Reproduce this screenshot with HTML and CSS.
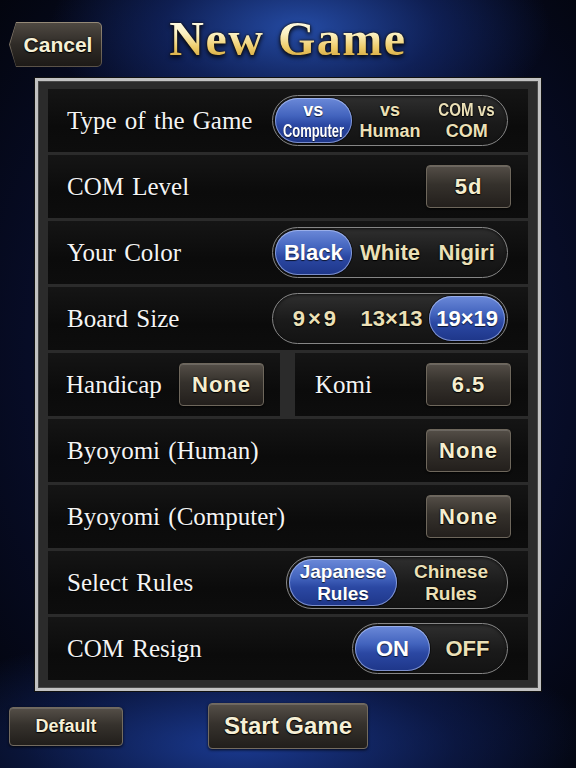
FILE: index.html
```html
<!DOCTYPE html>
<html lang="en">
<head>
<meta charset="utf-8">
<title>New Game</title>
<link rel="stylesheet" href="styles.css">
</head>
<body>
<div class="screen">
  <header class="top">
    <div class="cancel"><span class="cancel-face">Cancel</span></div>
    <h1 class="title">New Game</h1>
    <div class="spacer"></div>
  </header>

  <main class="panel">
    <div class="row">
      <span class="label">Type of the Game</span>
      <div class="seg seg-3">
        <span class="opt two on"><span>vs</span><span class="narrow n70">Computer</span></span>
        <span class="opt two"><span>vs</span><span>Human</span></span>
        <span class="opt two"><span class="narrow n82">COM vs</span><span>COM</span></span>
      </div>
    </div>

    <div class="row">
      <span class="label">COM Level</span>
      <span class="btn">5d</span>
    </div>

    <div class="row">
      <span class="label">Your Color</span>
      <div class="seg seg-3">
        <span class="opt on">Black</span>
        <span class="opt">White</span>
        <span class="opt">Nigiri</span>
      </div>
    </div>

    <div class="row">
      <span class="label">Board Size</span>
      <div class="seg seg-3 seg-board">
        <span class="opt wide">9×9</span>
        <span class="opt">13×13</span>
        <span class="opt on">19×19</span>
      </div>
    </div>

    <div class="split">
      <div class="row cell-left">
        <span class="label">Handicap</span>
        <span class="btn">None</span>
      </div>
      <div class="row cell-right">
        <span class="label">Komi</span>
        <span class="btn">6.5</span>
      </div>
    </div>

    <div class="row">
      <span class="label">Byoyomi (Human)</span>
      <span class="btn">None</span>
    </div>

    <div class="row">
      <span class="label">Byoyomi (Computer)</span>
      <span class="btn">None</span>
    </div>

    <div class="row">
      <span class="label">Select Rules</span>
      <div class="seg seg-rules">
        <span class="opt two rules on"><span>Japanese</span><span>Rules</span></span>
        <span class="opt two rules"><span>Chinese</span><span>Rules</span></span>
      </div>
    </div>

    <div class="row">
      <span class="label">COM Resign</span>
      <div class="seg seg-onoff">
        <span class="opt on">ON</span>
        <span class="opt">OFF</span>
      </div>
    </div>
  </main>

  <footer class="bottom">
    <span class="fbtn fbtn-default">Default</span>
    <span class="fbtn fbtn-start">Start Game</span>
  </footer>
</div>
</body>
</html>
```

FILE: styles.css
```css
html, body {
  margin: 0;
  padding: 0;
}

body {
  width: 576px;
  height: 768px;
  overflow: hidden;
  font-family: "Liberation Sans", Arial, sans-serif;
  background:
    radial-gradient(ellipse 250px 115px at 300px 28px, rgba(38, 78, 170, 0.95), rgba(22, 48, 125, 0.55) 55%, rgba(10, 22, 70, 0) 100%),
    radial-gradient(ellipse 360px 115px at 240px 745px, rgba(28, 62, 155, 0.9), rgba(18, 40, 110, 0.45) 60%, rgba(10, 22, 70, 0) 100%),
    radial-gradient(ellipse 420px 520px at 300px 360px, #0d1b4c, #070c26 65%, #03050e 100%);
}

.screen {
  width: 576px;
  height: 768px;
  display: flex;
  flex-direction: column;
}

/* ---------- header ---------- */
.top {
  height: 78px;
  display: grid;
  grid-template-columns: 1fr auto 1fr;
  align-items: start;
}

.cancel {
  margin: 22px 0 0 9px;
  width: 93px;
  height: 45px;
  box-sizing: border-box;
  padding: 1px;
  border-radius: 0 5px 5px 0;
  background: linear-gradient(#958a78, #5a5248);
  clip-path: polygon(7px 0, 100% 0, 100% 100%, 7px 100%, 0 50%);
}

.cancel-face {
  display: flex;
  align-items: center;
  justify-content: center;
  height: 100%;
  padding-left: 5px;
  box-sizing: border-box;
  border-radius: 0 4px 4px 0;
  clip-path: polygon(6px 0, 100% 0, 100% 100%, 6px 100%, 0 50%);
  background: linear-gradient(#4f4942, #2f2b27 50%, #1d1a17);
  color: #f6f0d6;
  font-weight: bold;
  font-size: 21px;
  text-shadow: 0 0 2px #000, 0 1px 1px #000;
}

.title {
  margin: 15px 0 0;
  font-family: "Liberation Serif", "Times New Roman", serif;
  font-weight: bold;
  font-size: 48px;
  line-height: 48px;
  letter-spacing: 1.5px;
  white-space: nowrap;
  background: linear-gradient(#fffef4 0%, #fcf2c4 38%, #eecb68 68%, #c9992f 100%);
  -webkit-background-clip: text;
  background-clip: text;
  color: transparent;
  filter: drop-shadow(0 0 1px #1a1208) drop-shadow(0 2px 2px rgba(0, 0, 0, 0.85));
}

/* ---------- settings panel ---------- */
.panel {
  margin: 0 35px;
  border: 3px solid #c2c2c2;
  padding: 8px 10px;
  background: #2b2b2b;
  display: flex;
  flex-direction: column;
  gap: 3px;
  box-shadow: 0 0 0 1px #111, inset 0 0 0 1px #4a4a4a;
}

.row {
  height: 63px;
  box-sizing: border-box;
  display: flex;
  align-items: center;
  justify-content: space-between;
  padding: 0 17px 0 19px;
  background: linear-gradient(#151515, #0b0b0b 60%, #0d0d0d);
}

.split {
  display: grid;
  grid-template-columns: 232px 1fr;
  gap: 15px;
}

.cell-left {
  padding: 0 16px 0 18px;
}

.cell-right {
  padding: 0 17px 0 20px;
}

.label {
  font-family: "Liberation Serif", "Times New Roman", serif;
  font-size: 25px;
  word-spacing: 2px;
  color: #f4f4f4;
  white-space: nowrap;
  text-shadow: 0 1px 1px #000;
}

/* value buttons */
.btn {
  width: 85px;
  height: 43px;
  box-sizing: border-box;
  display: flex;
  align-items: center;
  justify-content: center;
  border: 1px solid #6e675c;
  border-radius: 4px;
  background: linear-gradient(#544e47, #35312c 45%, #231f1c);
  box-shadow: inset 0 1px 0 rgba(255, 255, 255, 0.14), 0 1px 2px rgba(0, 0, 0, 0.8);
  color: #f5eecf;
  font-weight: bold;
  font-size: 22px;
  letter-spacing: 1px;
  text-shadow: 0 0 2px #000, 0 1px 1px #000;
}

/* segmented pill controls */
.seg {
  box-sizing: border-box;
  height: 51px;
  display: flex;
  padding: 2px;
  margin-right: 3px;
  border: 1.5px solid #868686;
  border-radius: 26px;
  background: linear-gradient(#2f2f2f, #1a1a1a 55%, #131313);
  box-shadow: inset 0 1px 3px rgba(0, 0, 0, 0.7);
}

.seg-3 {
  width: 236px;
}

.seg-rules {
  width: 222px;
  height: 53px;
}

.seg-onoff {
  width: 156px;
}

.opt {
  flex: 1 1 0;
  min-width: 0;
  display: flex;
  flex-direction: column;
  align-items: center;
  justify-content: center;
  border-radius: 24px;
  color: #ebe0b7;
  font-weight: bold;
  font-size: 22px;
  line-height: 1;
  white-space: nowrap;
  text-shadow: 0 0 2px #000, 0 1px 1px #000;
}

.opt.on {
  color: #ffffff;
  background: linear-gradient(#6b89d8, #4263bd 40%, #2b48a3 60%, #1e3689);
  box-shadow: inset 0 0 0 1px rgba(185, 200, 245, 0.6), 0 0 0 1px rgba(0, 0, 0, 0.55);
  text-shadow: 0 1px 1px rgba(0, 0, 0, 0.7);
}

.opt.two {
  font-size: 18px;
  line-height: 21px;
}

.opt.two.rules {
  font-size: 19px;
  line-height: 22px;
}

.opt.wide {
  letter-spacing: 3px;
  padding-left: 3px;
}

.narrow {
  display: inline-block;
}

.n70 {
  transform: scaleX(0.72);
}

.n82 {
  transform: scaleX(0.84);
}

/* ---------- footer ---------- */
.bottom {
  display: flex;
  align-items: center;
  gap: 85px;
  padding: 12px 0 0 9px;
}

.fbtn {
  box-sizing: border-box;
  display: flex;
  align-items: center;
  justify-content: center;
  border: 1px solid #736b5f;
  border-radius: 4px;
  background: linear-gradient(#554f48, #36322d 45%, #211e1b);
  box-shadow: inset 0 1px 0 rgba(255, 255, 255, 0.14), 0 1px 3px rgba(0, 0, 0, 0.8);
  color: #f6f0d6;
  font-weight: bold;
  text-shadow: 0 0 2px #000, 0 1px 1px #000;
}

.fbtn-default {
  width: 114px;
  height: 39px;
  font-size: 18px;
}

.fbtn-start {
  width: 160px;
  height: 46px;
  font-size: 24px;
}
```
